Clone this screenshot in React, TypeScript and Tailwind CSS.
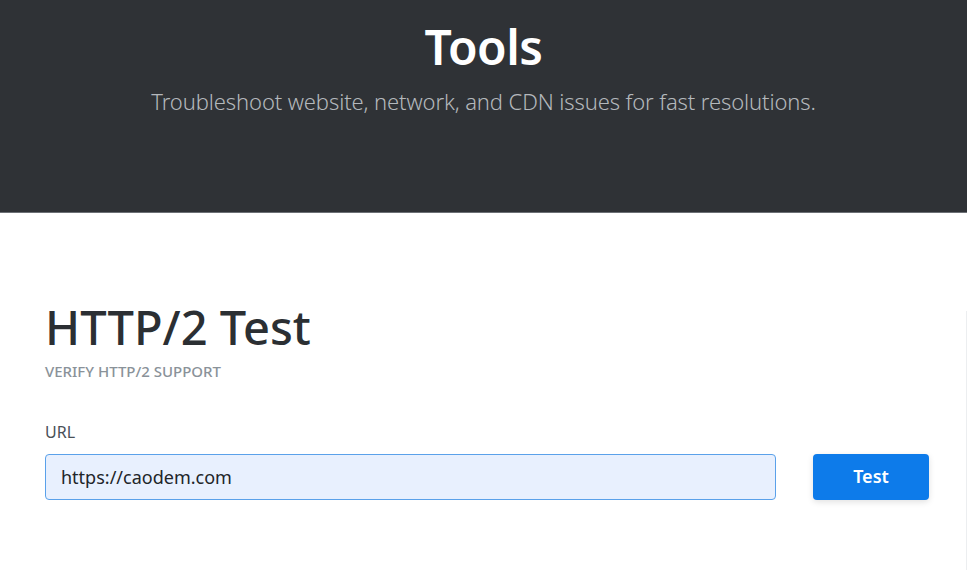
import { useState } from 'react';

const FONT = "font-['Noto_Sans','Open_Sans',sans-serif]";

function Hero() {
  return (
    <header className="h-[213px] border-b border-[#6c7075] bg-[#2f3236] pt-[18px] text-center">
      <h1 className="text-[48px] font-semibold leading-[58px] tracking-[-0.01em] text-white">Tools</h1>
      <p className="mt-[9px] text-[22px] font-light tracking-[-0.005em] text-[#b4b8bc]">
        Troubleshoot website, network, and CDN issues for fast resolutions.
      </p>
    </header>
  );
}

export default function App() {
  const [url, setUrl] = useState('https://caodem.com');
  return (
    <div className={`${FONT} min-h-[570px] overflow-hidden bg-white`}>
      <Hero />
      <main className="relative px-[45px] pt-[84px]">
        <div className="absolute right-0 top-[98px] h-[300px] w-px bg-[#eceef0]" />
        <h2 className="text-[47px] font-medium leading-[60px] text-[#2b2f33]">HTTP/2 Test</h2>
        <div className="mt-[3px] text-[15px] font-medium uppercase text-[#8a9299]">
          Verify HTTP/2 support
        </div>
        <label htmlFor="url" className="mt-[37px] block text-[16px] text-[#495057]">
          URL
        </label>
        <div className="mt-[10px] flex items-center gap-[37px]">
          <input
            id="url"
            value={url}
            onChange={(e) => setUrl(e.target.value)}
            className="h-[46px] w-[731px] shrink-0 rounded-[4px] border border-[#5aa1ea] bg-[#e8f0fe] px-[15px] text-[18px] text-[#212529] outline-none"
          />
          <button
            type="button"
            className="h-[46px] w-[116px] shrink-0 rounded-[4px] bg-[#0d7bea] text-[18px] font-semibold text-white shadow-[0_2px_6px_rgba(0,0,0,0.12)]"
          >
            Test
          </button>
        </div>
      </main>
    </div>
  );
}
